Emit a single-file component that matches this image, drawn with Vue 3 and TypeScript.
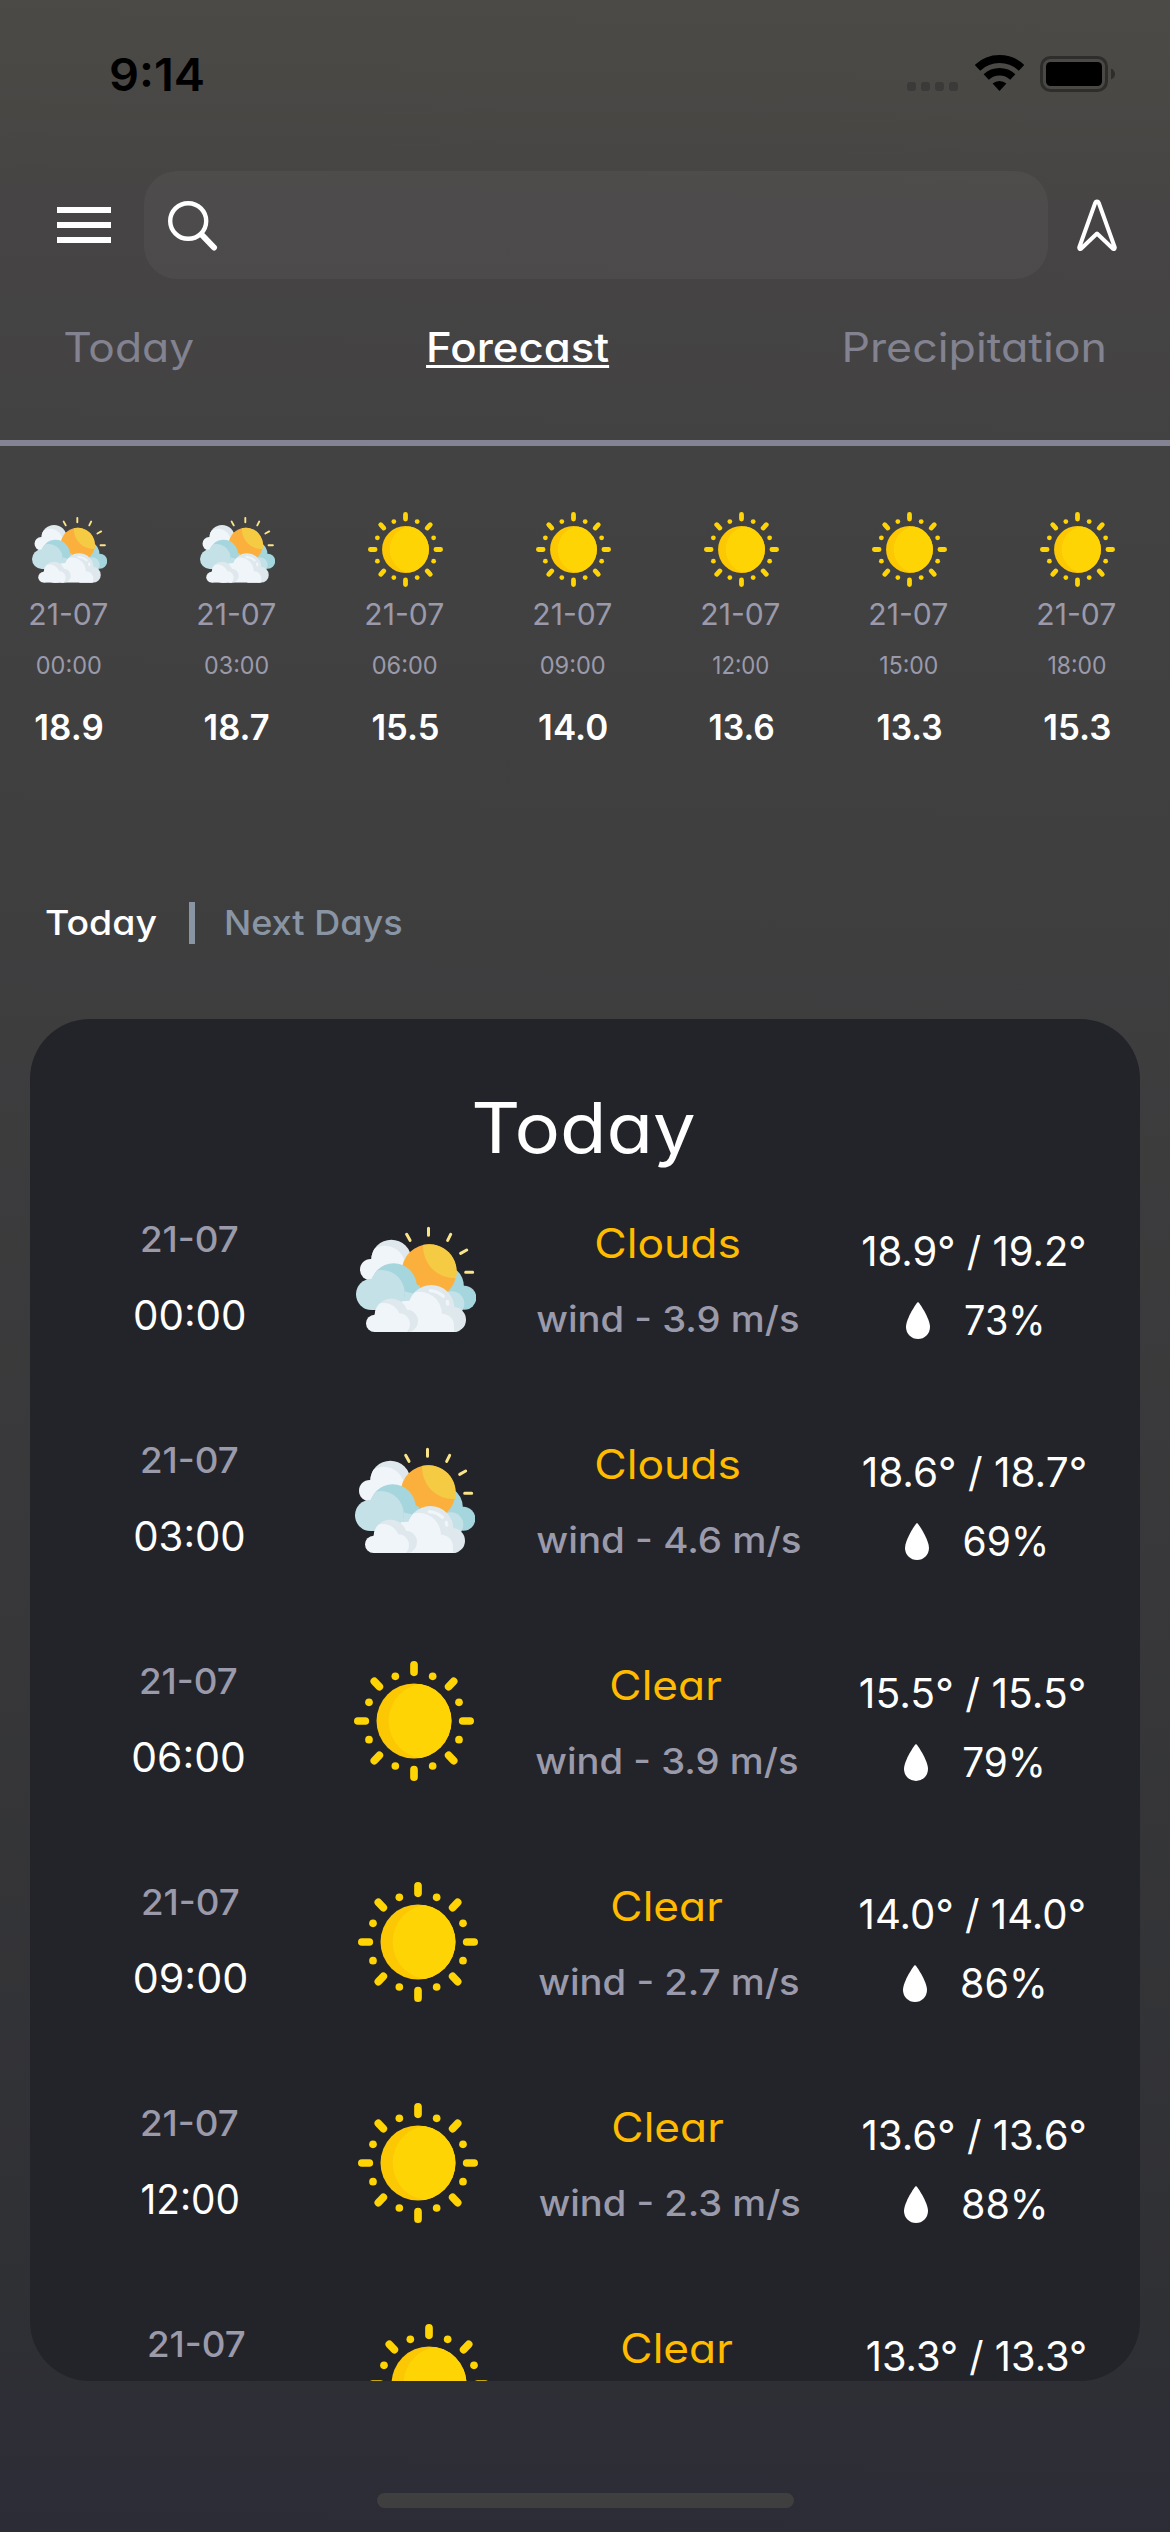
<script setup lang="ts">
import type { Directive } from 'vue'

type Sky = 'clouds' | 'sun'

interface Hour {
  sky: Sky
  time: string
  timeWidth: number
  temp: string
  tempWidth: number
}

interface Entry {
  sky: Sky
  label: string
  labelWidth: number
  range: string
  rangeWidth: number
  /** horizontal centres of the four cells, measured from the card edge */
  centres: [number, number, number, number]
  /** second line of each cell; left out for the entry cut by the card's edge */
  details?: {
    time: string
    timeWidth: number
    wind: string
    windWidth: number
    humidity: string
    humidityWidth: number
  }
}

const hours: Hour[] = [
  { sky: 'clouds', time: '00:00', timeWidth: 64, temp: '18.9', tempWidth: 67 },
  { sky: 'clouds', time: '03:00', timeWidth: 63, temp: '18.7', tempWidth: 64 },
  { sky: 'sun', time: '06:00', timeWidth: 64, temp: '15.5', tempWidth: 66 },
  { sky: 'sun', time: '09:00', timeWidth: 64, temp: '14.0', tempWidth: 68 },
  { sky: 'sun', time: '12:00', timeWidth: 55, temp: '13.6', tempWidth: 64 },
  { sky: 'sun', time: '15:00', timeWidth: 57, temp: '13.3', tempWidth: 64 },
  { sky: 'sun', time: '18:00', timeWidth: 57, temp: '15.3', tempWidth: 66 },
]

const entries: Entry[] = [
  {
    sky: 'clouds', label: 'Clouds', labelWidth: 143, range: '18.9° / 19.2°', rangeWidth: 222, centres: [160, 386, 637.5, 943],
    details: { time: '00:00', timeWidth: 110, wind: '3.9', windWidth: 262, humidity: '73%', humidityWidth: 77 },
  },
  {
    sky: 'clouds', label: 'Clouds', labelWidth: 143, range: '18.6° / 18.7°', rangeWidth: 222, centres: [159.5, 385, 638, 943.5],
    details: { time: '03:00', timeWidth: 109, wind: '4.6', windWidth: 264, humidity: '69%', humidityWidth: 81 },
  },
  {
    sky: 'sun', label: 'Clear', labelWidth: 110, range: '15.5° / 15.5°', rangeWidth: 224, centres: [159, 384, 636.5, 942],
    details: { time: '06:00', timeWidth: 111, wind: '3.9', windWidth: 262, humidity: '79%', humidityWidth: 79 },
  },
  {
    sky: 'sun', label: 'Clear', labelWidth: 110, range: '14.0° / 14.0°', rangeWidth: 224, centres: [161, 388, 638, 942],
    details: { time: '09:00', timeWidth: 112, wind: '2.7', windWidth: 260, humidity: '86%', humidityWidth: 82 },
  },
  {
    sky: 'sun', label: 'Clear', labelWidth: 110, range: '13.6° / 13.6°', rangeWidth: 222, centres: [160, 388, 639, 943],
    details: { time: '12:00', timeWidth: 97, wind: '2.3', windWidth: 261, humidity: '88%', humidityWidth: 82 },
  },
  { sky: 'sun', label: 'Clear', labelWidth: 110, range: '13.3° / 13.3°', rangeWidth: 218, centres: [166.5, 399, 648, 945.5] },
]

// Turns the cell centres into adjoining column widths.
function columns(centres: number[]): string {
  let edge = 0
  return centres
    .map((centre) => {
      const width = (centre - edge) * 2
      edge += width
      return `${width}px`
    })
    .join(' ')
}

// Stretches a label horizontally so that its visible width is the given one.
const vFit: Directive<HTMLElement, number> = {
  mounted(el, { value }) {
    const ctx = document.createElement('canvas').getContext('2d')
    if (!ctx) return
    const css = getComputedStyle(el)
    ctx.font = `${css.fontWeight} ${css.fontSize} Inter`
    const m = ctx.measureText(el.textContent ?? '')
    const advance = el.getBoundingClientRect().width
    const left = -m.actualBoundingBoxLeft
    const right = m.width - m.actualBoundingBoxRight
    const scale = value / (advance - left - right)
    const shift = ((right - left) / 2) * scale
    el.style.marginInline = `${(value - advance) / 2}px`
    el.style.transform = `translateX(${shift}px) scaleX(${scale})`
  },
}
</script>

<template>
  <main class="screen">
    <svg class="defs" aria-hidden="true">
      <defs>
        <clipPath id="back-cloud"><circle cx="184" cy="149" r="60" /></clipPath>
        <clipPath id="mid-cloud"><circle cx="191" cy="229" r="69" /></clipPath>
        <clipPath id="front-cloud"><circle cx="304" cy="294" r="69" /></clipPath>
        <clipPath id="low-cloud"><circle cx="184" cy="316" r="50" /></clipPath>
        <clipPath id="ground"><rect x="70" y="20" width="380" height="346" /></clipPath>
        <clipPath id="disk"><circle cx="252" cy="244" r="112.5" /></clipPath>
      </defs>
      <symbol id="clouds" viewBox="78 27 360 360">
        <g stroke="#fae48a" stroke-width="9" stroke-linecap="round">
          <path d="M295.500 55V76M230 73L240 91M362 73L353 91M392 130L410 120M407 186.500H428" />
        </g>
        <circle cx="184" cy="149" r="60" fill="#dfe9ed" />
        <circle cx="122" cy="179" r="32" fill="#f0f5f9" />
        <circle cx="164" cy="169" r="62" fill="#f0f5f9" clip-path="url(#back-cloud)" />
        <path d="M366 170Q402 192 402 232L410 280H340Z" fill="#a5d5dd" />
        <circle cx="403" cy="263" r="36" fill="#a5d5dd" />
        <circle cx="366" cy="281" r="37" fill="#c5e1e8" />
        <circle cx="297" cy="185" r="82" fill="#fbb03e" />
        <path d="M279 105A82 82 0 0 1 378 204C324 206 279 166 279 105Z" fill="#f6cb44" />
        <circle cx="191" cy="229" r="69" fill="#a5d5dd" />
        <path d="M256 212Q258 226 270 227L270 290H190Z" fill="#a5d5dd" />
        <circle cx="125" cy="253" r="47" fill="#c5e1e8" />
        <circle cx="155" cy="249" r="69" fill="#c5e1e8" clip-path="url(#mid-cloud)" />
        <path d="M125 260H224V244Q236 248 248 250V300H125Z" fill="#c5e1e8" />
        <g clip-path="url(#ground)">
          <circle cx="304" cy="294" r="69" fill="#dfe9ed" />
          <circle cx="370" cy="329" r="38" fill="#dfe9ed" />
          <circle cx="268" cy="313" r="68" fill="#f0f5f9" clip-path="url(#front-cloud)" />
          <circle cx="336" cy="347" r="36" fill="#f0f5f9" />
          <path d="M215 274L238 272L290 270L334 312L372 350V367H215Z" fill="#f0f5f9" />
          <circle cx="184" cy="316" r="50" fill="#dfe9ed" />
          <circle cx="230" cy="333" r="34" fill="#dfe9ed" />
          <circle cx="134" cy="340" r="26" fill="#f0f5f9" />
          <circle cx="161" cy="330" r="51" fill="#f0f5f9" clip-path="url(#low-cloud)" />
          <circle cx="207" cy="343" r="33" fill="#f0f5f9" />
          <path d="M134 318H208V366H134Z" fill="#f0f5f9" />
        </g>
        <path d="M301 242Q324 244 340 259M352 274L353 282" fill="none" stroke="#f0f5f9" stroke-width="10" stroke-linecap="round" />
      </symbol>
      <symbol id="sun" viewBox="72 64 360 360">
        <circle cx="252" cy="244" r="112.500" fill="#fcc803" />
        <circle cx="289" cy="244" r="113" fill="#ffd405" clip-path="url(#disk)" />
        <g stroke="#ffd405" stroke-width="23" stroke-linecap="round">
          <path d="M252 75.500V98M252 390V412.500M83.500 244H106M398 244H420.500M133 125L148 141M371 125L356 141M133 363L148 347M371 363L356 347" />
        </g>
        <g fill="#ffd405">
          <circle cx="196" cy="110" r="11.500" /><circle cx="308" cy="110" r="11.500" />
          <circle cx="117" cy="188" r="11.500" /><circle cx="387" cy="188" r="11.500" />
          <circle cx="117" cy="300" r="11.500" /><circle cx="387" cy="300" r="11.500" />
          <circle cx="196" cy="379" r="11.500" /><circle cx="308" cy="379" r="11.500" />
        </g>
      </symbol>
    </svg>

    <header class="status">
      <span v-fit="92" class="clock">9:14</span>
      <div class="indicators">
        <span class="signal"><i v-for="n in 4" :key="n" /></span>
        <svg class="wifi" viewBox="0 0 49 36">
          <path d="M2.500 12.800A32 32 0 0 1 46.500 12.800" fill="none" stroke="#000" stroke-width="8" />
          <path d="M11.200 22A19.300 19.300 0 0 1 37.800 22" fill="none" stroke="#000" stroke-width="7.500" />
          <path d="M24.500 36L17.600 28.600A10.300 10.300 0 0 1 31.400 28.600Z" />
        </svg>
        <svg class="battery" viewBox="0 0 76 36">
          <rect x="1.500" y="1.500" width="65" height="33" rx="9" fill="none" stroke="#2e2d2b" stroke-width="3" />
          <rect x="6" y="6" width="56" height="24" rx="4.500" />
          <path d="M71 12.500Q75 14.500 75 18T71 23.500Z" fill="#2e2d2b" />
        </svg>
      </div>
    </header>

    <div class="toolbar">
      <span class="menu"><i v-for="n in 3" :key="n" /></span>
      <div class="search">
        <svg viewBox="0 0 50 50" fill="none" stroke="#fff" stroke-linecap="round">
          <ellipse cx="20.200" cy="20" rx="18" ry="17.800" stroke-width="4.400" />
          <path d="M34 34L46 46.500" stroke-width="6" />
        </svg>
      </div>
      <svg class="locate" viewBox="0 0 40 53" fill="none" stroke="#fff" stroke-width="4" stroke-linejoin="round">
        <path d="M20 2.500Q18.600 2.500 18 4.500L2.200 48.500Q2.200 50.800 4 49.800L20 34.500L36 49.800Q37.800 50.800 37.800 48.500L22 4.500Q21.400 2.500 20 2.500Z" />
      </svg>
    </div>

    <nav class="tabs">
      <span v-fit="129">Today</span>
      <span v-fit="179" class="active">Forecast</span>
      <span v-fit="259">Precipitation</span>
    </nav>

    <section class="hourly">
      <div v-for="hour in hours" :key="hour.time" class="hour">
        <svg><use :href="`#${hour.sky}`" /></svg>
        <span v-fit="77" class="date">21-07</span>
        <span v-fit="hour.timeWidth" class="time">{{ hour.time }}</span>
        <span v-fit="hour.tempWidth" class="temp">{{ hour.temp }}</span>
      </div>
    </section>

    <div class="switch">
      <span v-fit="111" class="on">Today</span>
      <i />
      <span v-fit="175">Next Days</span>
    </div>

    <section class="card">
      <h1><span v-fit="220">Today</span></h1>
      <div
        v-for="(entry, index) in entries"
        :key="index"
        class="row"
        :style="{ gridTemplateColumns: columns(entry.centres) }"
      >
        <div class="when">
          <span v-fit="95.5" class="date">21-07</span>
          <span v-if="entry.details" v-fit="entry.details.timeWidth">{{ entry.details.time }}</span>
        </div>
        <svg class="icon"><use :href="`#${entry.sky}`" /></svg>
        <div class="what">
          <span v-fit="entry.labelWidth" class="label">{{ entry.label }}</span>
          <span v-if="entry.details" v-fit="entry.details.windWidth" class="wind">wind - {{ entry.details.wind }} m/s</span>
        </div>
        <div class="values">
          <span v-fit="entry.rangeWidth">{{ entry.range }}</span>
          <div v-if="entry.details" class="humidity">
            <svg viewBox="0 0 24 37"><path d="M12 0C13 0 24 16.500 24 25A12 12 0 0 1 0 25C0 16.500 11 0 12 0Z" fill="#fff" /></svg>
            <span v-fit="entry.details.humidityWidth">{{ entry.details.humidity }}</span>
          </div>
        </div>
      </div>
    </section>

    <div class="home-bar" />
  </main>
</template>

<style>
body {
  margin: 0;
  background: #2d2d37;
}
</style>

<style scoped>
.screen {
  box-sizing: border-box;
  display: flex;
  flex-direction: column;
  width: 1170px;
  height: 2532px;
  overflow: hidden;
  background: linear-gradient(181deg, #4b4a46 0%, #494845 4%, #464444 9%, #434242 18%, #3f3f40 34%, #38383a 62%, #2f3034 91%, #2c2c37 100%);
  color: #fff;
  font-family: Inter, 'Liberation Sans', sans-serif;
  font-feature-settings: 'cv11';
  white-space: nowrap;
}

.screen span {
  display: inline-block;
}

.defs {
  position: absolute;
  width: 0;
  height: 0;
}

.status {
  display: flex;
  justify-content: space-between;
  height: 171px;
  padding: 0 54px 0 111px;
}

.clock {
  height: 60px;
  margin-top: 45px;
  color: #000;
  font-size: 45px;
  font-weight: 600;
  line-height: 60px;
}

.indicators {
  display: flex;
  align-items: flex-start;
}

.screen .signal {
  display: flex;
  gap: 5px;
  margin: 82px 17px 0 0;
}

.signal i {
  width: 9px;
  height: 9px;
  border-radius: 3px;
  background: #3b3a38;
}

.wifi {
  width: 49px;
  height: 36px;
  margin: 55px 16px 0 0;
}

.battery {
  width: 76px;
  height: 36px;
  margin-top: 56px;
}

.toolbar {
  display: flex;
  align-items: center;
  height: 108px;
  padding: 0 53px 0 57px;
}

.screen .menu {
  display: flex;
  flex-direction: column;
  gap: 9px;
  width: 54px;
}

.menu i {
  height: 6px;
  background: #fff;
}

.search {
  box-sizing: border-box;
  width: 904px;
  height: 108px;
  margin: 0 29px 0 33px;
  padding: 29.500px 24px;
  border-radius: 33px;
  background: rgba(255, 255, 255, 0.04);
}

.search svg {
  display: block;
  width: 50px;
  height: 50px;
}

.locate {
  width: 40px;
  height: 53px;
}

.tabs {
  box-sizing: border-box;
  display: flex;
  justify-content: space-between;
  height: 167px;
  padding: 39px 66px 0 64px;
  border-bottom: 6px solid #838393;
  color: #828290;
  font-size: 40.500px;
  line-height: 60px;
}

.tabs span {
  height: 60px;
}

.tabs .active {
  color: #fff;
  font-weight: 500;
  text-decoration: underline;
  text-decoration-thickness: 3px;
  text-underline-offset: 3px;
}

.hourly {
  display: flex;
  height: 436px;
  margin-left: -15px;
}

.hour {
  display: flex;
  flex: 0 0 168px;
  flex-direction: column;
  align-items: center;
  padding-top: 66px;
}

.hour svg {
  width: 75px;
  height: 75px;
}

.hour .date {
  margin-top: 4px;
  color: #9a9aab;
  font-size: 30px;
  line-height: 46px;
}

.hour .time {
  margin-top: 9px;
  color: #9a9aab;
  font-size: 24px;
  line-height: 40px;
}

.hour .temp {
  margin-top: 16px;
  font-size: 35px;
  font-weight: 600;
  line-height: 50px;
}

.switch {
  display: flex;
  align-items: center;
  height: 82px;
  padding-left: 46px;
  color: #8a95a3;
  font-size: 34.500px;
  font-weight: 500;
  line-height: 82px;
}

.switch .on {
  color: #fff;
}

.switch i {
  width: 6px;
  height: 42px;
  margin: 0 31px 0 32px;
  background: #8a95a3;
}

.card {
  box-sizing: border-box;
  height: 1362px;
  margin: 55px 30px 0;
  padding-top: 54px;
  overflow: hidden;
  border-radius: 60px;
  background: #232429;
}

.card h1 {
  margin: 0 0 6px;
  font-size: 69.500px;
  font-weight: 400;
  line-height: 110px;
  text-align: center;
}

.row {
  display: grid;
  height: 221px;
  justify-items: center;
  align-items: start;
  font-size: 40.500px;
}

.when,
.what,
.values {
  display: flex;
  flex-direction: column;
  align-items: center;
}

.when {
  padding-top: 13px;
  line-height: 76px;
}

.when .date,
.wind {
  color: #9a9aab;
  font-size: 35.500px;
  font-weight: 500;
}

.icon {
  width: 120px;
  height: 120px;
  margin-top: 30px;
}

.what {
  padding-top: 17px;
  line-height: 75.500px;
}

.label {
  color: #ffbb00;
}

.values {
  padding-top: 28px;
  line-height: 69px;
}

.humidity {
  display: flex;
  align-items: center;
  padding-left: 3px;
}

.humidity svg {
  width: 24px;
  height: 37px;
  margin-right: 35px;
}

.home-bar {
  width: 417px;
  height: 15px;
  margin: 112px auto 0;
  border-radius: 8px;
  background: #3f3f40;
}
</style>
